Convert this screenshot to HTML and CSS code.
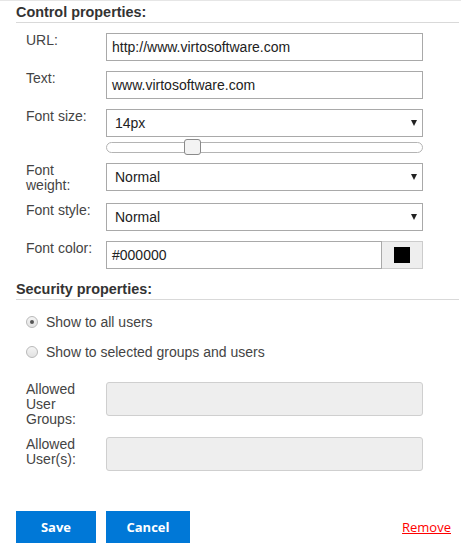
FILE: index.html
```html
<!DOCTYPE html>
<html>
<head>
<meta charset="utf-8">
<link rel="stylesheet" href="styles.css">
</head>
<body>
<div class="panel">
  <h2 class="section-title">Control properties:</h2>
  <div class="rows">
    <div class="row">
      <label class="label">URL:</label>
      <div class="field"><div class="input">http://www.virtosoftware.com</div></div>
    </div>
    <div class="row">
      <label class="label">Text:</label>
      <div class="field"><div class="input">www.virtosoftware.com</div></div>
    </div>
    <div class="row">
      <label class="label">Font size:</label>
      <div class="field">
        <div class="select">14px</div>
        <div class="slider"><div class="slider-track"><span class="slider-thumb"></span></div></div>
      </div>
    </div>
    <div class="row">
      <label class="label">Font weight:</label>
      <div class="field"><div class="select">Normal</div></div>
    </div>
    <div class="row">
      <label class="label">Font style:</label>
      <div class="field"><div class="select">Normal</div></div>
    </div>
    <div class="row">
      <label class="label">Font color:</label>
      <div class="field color-field">
        <div class="input color-input">#000000</div>
        <div class="swatch"><span class="swatch-box"></span></div>
      </div>
    </div>
  </div>

  <h2 class="section-title">Security properties:</h2>
  <div class="radios">
    <div class="radio-row"><span class="radio checked"></span><span>Show to all users</span></div>
    <div class="radio-row"><span class="radio"></span><span>Show to selected groups and users</span></div>
  </div>
  <div class="rows allowed">
    <div class="row">
      <label class="label">Allowed User Groups:</label>
      <div class="field"><div class="input disabled"></div></div>
    </div>
    <div class="row">
      <label class="label">Allowed User(s):</label>
      <div class="field"><div class="input disabled"></div></div>
    </div>
  </div>

  <div class="actions">
    <button class="btn btn-save">Save</button>
    <button class="btn btn-cancel">Cancel</button>
    <a class="remove" href="#">Remove</a>
  </div>
</div>
</body>
</html>
```
FILE: styles.css
```css
html, body {
  margin: 0;
  padding: 0;
  background: #fff;
}
body {
  font-family: "Liberation Sans", Arial, sans-serif;
  font-size: 14px;
  color: #444;
}
.panel {
  border-top: 1px solid #e6e6e6;
  padding: 0 2px 0 16px;
}
.section-title {
  margin: 3px 0 0 0;
  font-family: "Liberation Sans", Arial, sans-serif;
  font-size: 14.4px;
  font-weight: 700;
  line-height: 17px;
  color: #333;
  padding-bottom: 1px;
  border-bottom: 1px solid #d9d9d9;
}
.rows {
  display: flex;
  flex-direction: column;
  gap: 10px;
  padding: 10px 0 9px 0;
}
.row {
  display: flex;
  align-items: flex-start;
  padding-left: 10px;
}
.label {
  width: 80px;
  padding-right: 10px;
  box-sizing: border-box;
  line-height: 15px;
  color: #444;
}
.field {
  width: 317px;
}
.input, .select {
  box-sizing: border-box;
  height: 28px;
  border: 1px solid #a9a9a9;
  background: #fff;
  color: #222;
  font-size: 14px;
  line-height: 26px;
  padding: 0 5px;
  white-space: nowrap;
  overflow: hidden;
}
.select {
  position: relative;
  padding-left: 8px;
}
.select::after {
  content: "";
  position: absolute;
  right: 5px;
  top: 50%;
  margin-top: -3px;
  width: 0;
  height: 0;
  border-left: 3.5px solid transparent;
  border-right: 3.5px solid transparent;
  border-top: 6px solid #222;
}
.slider {
  padding-top: 5px;
  height: 11px;
}
.slider-track {
  position: relative;
  height: 11px;
  box-sizing: border-box;
  border: 1px solid #b4b4b4;
  border-radius: 6px;
  background: #fff;
}
.slider-thumb {
  position: absolute;
  left: 77px;
  top: -4px;
  width: 17px;
  height: 16px;
  box-sizing: border-box;
  border: 1px solid #8a8a8a;
  border-radius: 3px;
  background: #f3f3f3;
}
.color-field {
  display: flex;
}
.color-input {
  flex: 1;
}
.swatch {
  width: 41px;
  height: 28px;
  box-sizing: border-box;
  border: 1px solid #cccccc;
  border-left: none;
  background: #eeeeee;
  display: flex;
  align-items: center;
  justify-content: center;
}
.swatch-box {
  width: 16px;
  height: 16px;
  background: #000;
}
.input.disabled {
  height: 34px;
  background: #eeeeee;
  border: 1px solid #cfcfcf;
  border-radius: 3px;
}
.radios {
  display: flex;
  flex-direction: column;
  gap: 10px;
  padding: 12px 0 10px 10px;
}
.radio-row {
  display: flex;
  align-items: center;
  height: 20px;
  line-height: 20px;
  color: #444;
  gap: 8px;
}
.radio {
  width: 12px;
  height: 12px;
  box-sizing: border-box;
  border-radius: 50%;
  border: 1px solid #b9b9b9;
  background: linear-gradient(#f4f4f4, #e2e2e2);
  display: flex;
  align-items: center;
  justify-content: center;
}
.radio.checked::after {
  content: "";
  width: 4px;
  height: 4px;
  border-radius: 50%;
  background: #555;
}
.rows.allowed {
  padding-top: 10px;
  padding-bottom: 0;
}
.actions {
  display: flex;
  align-items: center;
  gap: 10px;
  margin-top: 40px;
  padding-right: 8px;
}
.btn {
  height: 32px;
  border: none;
  background: #0078d7;
  color: #fff;
  font-family: "Open Sans", sans-serif;
  font-weight: 700;
  font-size: 13px;
  padding: 0;
  cursor: pointer;
}
.btn-save {
  width: 80px;
}
.btn-cancel {
  width: 84px;
}
.remove {
  margin-left: auto;
  font-family: "Open Sans", sans-serif;
  font-size: 13px;
  color: #ff0000;
  text-decoration: underline;
}
```
